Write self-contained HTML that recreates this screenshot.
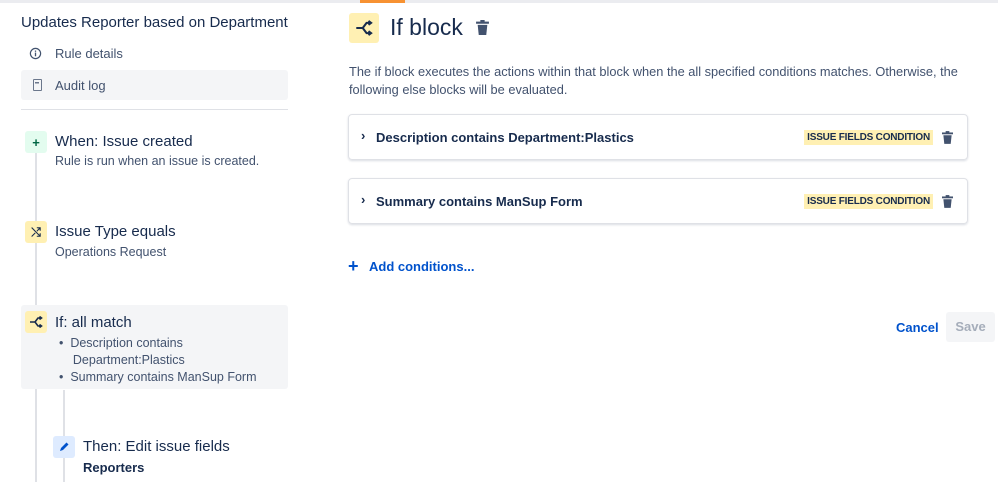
<!DOCTYPE html>
<html><head><style>
*{margin:0;padding:0;box-sizing:border-box}
body{width:998px;height:482px;overflow:hidden;background:#fff;font-family:"Liberation Sans",sans-serif;color:#172b4d;position:relative}
.a{position:absolute}
.ic{position:absolute;width:22px;height:22px;border-radius:3px;display:flex;align-items:center;justify-content:center;font-size:13px}
.card{position:absolute;left:348px;width:620px;height:46px;border:1px solid #dfe1e6;border-radius:4px;box-shadow:0 1px 2px rgba(9,30,66,.15)}
.card .t{position:absolute;left:27px;top:15px;font-size:13px;font-weight:bold;color:#172b4d}
.card .ch{position:absolute;left:12px;top:13px;font-size:13px;font-weight:bold}
.lz{position:absolute;right:34px;top:15px;background:#fff0b3;font-size:10px;font-weight:bold;padding:2px 3px;color:#172b4d;letter-spacing:-0.2px}
.tr{position:absolute;right:14px;top:16px}
</style></head><body>
<div class="a" style="left:0;top:0;width:998px;height:3px;background:#ebecf0"></div>
<div class="a" style="left:360px;top:0;width:45px;height:3px;background:#f79232"></div>

<div class="a" style="left:21px;top:14px;font-size:15px;">Updates Reporter based on Department</div>
<svg class="a" style="left:29px;top:47px" width="13" height="13" viewBox="0 0 14 14"><circle cx="7" cy="7" r="5.5" fill="none" stroke="#42526e" stroke-width="1.3"/><rect x="6.3" y="6" width="1.4" height="4" fill="#42526e"/><rect x="6.3" y="3.8" width="1.4" height="1.4" fill="#42526e"/></svg>
<div class="a" style="left:55px;top:46px;font-size:13px;color:#42526e">Rule details</div>
<div class="a" style="left:21px;top:70px;width:267px;height:30px;background:#f4f5f7;border-radius:3px"></div>
<div class="a" style="left:33px;top:79px;width:9px;height:12px;border:1.5px solid #6b778c;border-radius:1px;background:linear-gradient(#6b778c,#6b778c) 1px 2px/4px 1.5px no-repeat"></div>
<div class="a" style="left:55px;top:78px;font-size:13px;color:#42526e">Audit log</div>
<div class="a" style="left:21px;top:109px;width:267px;height:1px;background:#dfe1e6"></div>

<div class="a" style="left:35px;top:152px;width:2px;height:330px;background:#dfe1e6"></div>
<div class="a" style="left:63px;top:390px;width:2px;height:92px;background:#dfe1e6"></div>

<div class="ic" style="left:25px;top:131px;background:#e3fcef;color:#006644;font-weight:bold">+</div>
<div class="a" style="left:55px;top:133px;font-size:15px">When: Issue created</div>
<div class="a" style="left:55px;top:154px;font-size:12.5px;color:#42526e">Rule is run when an issue is created.</div>

<div class="ic" style="left:25px;top:221px;background:#fff0b3;font-size:12px;font-weight:bold">⤭</div>
<div class="a" style="left:55px;top:223px;font-size:15px">Issue Type equals</div>
<div class="a" style="left:55px;top:245px;font-size:12.5px;color:#42526e">Operations Request</div>

<div class="a" style="left:21px;top:305px;width:267px;height:84px;background:#f4f5f7;border-radius:3px"></div>
<div class="ic" style="left:25px;top:311px;background:#fff0b3"><svg width="14" height="12" viewBox="0 0 14 12"><path d="M1 6H6M6 6L9 2H12M6 6L9 10H12M10.5 0.5L12.5 2L10.5 3.5M10.5 8.5L12.5 10L10.5 11.5" fill="none" stroke="#172b4d" stroke-width="1.6"/></svg></div>
<div class="a" style="left:55px;top:314px;font-size:15px">If: all match</div>
<div class="a" style="left:59px;top:335px;font-size:12.5px;line-height:17px;color:#42526e">•&nbsp;&nbsp;Description contains<br>&nbsp;&nbsp;&nbsp;&nbsp;Department:Plastics<br>•&nbsp;&nbsp;Summary contains ManSup Form</div>

<div class="ic" style="left:53px;top:436px;background:#deebff"><svg width="12" height="12" viewBox="0 0 12 12"><path d="M2 10L3 7L8.5 1.5L10.5 3.5L5 9Z" fill="#0052cc"/></svg></div>
<div class="a" style="left:83px;top:438px;font-size:15px">Then: Edit issue fields</div>
<div class="a" style="left:83px;top:460px;font-size:13px;font-weight:bold">Reporters</div>

<div class="a" style="left:349px;top:13px;width:30px;height:30px;background:#fff0b3;border-radius:3px;display:flex;align-items:center;justify-content:center"><svg width="18" height="16" viewBox="0 0 14 12"><path d="M1 6H6M6 6L9 2H12M6 6L9 10H12M10.5 0.5L12.5 2L10.5 3.5M10.5 8.5L12.5 10L10.5 11.5" fill="none" stroke="#172b4d" stroke-width="1.6"/></svg></div>
<div class="a" style="left:390px;top:14px;font-size:23px;">If block</div>
<svg class="a" style="left:476px;top:20px" width="13" height="15" viewBox="0 0 12 14"><rect x="0" y="1.5" width="12" height="2" fill="#42526e"/><rect x="4" y="0" width="4" height="2" fill="#42526e"/><path d="M1.5 4.5H10.5L9.5 14H2.5Z" fill="#42526e"/></svg>

<div class="a" style="left:349px;top:63px;width:620px;font-size:12.8px;line-height:18px;color:#42526e">The if block executes the actions within that block when the all specified conditions matches. Otherwise, the following else blocks will be evaluated.</div>

<div class="card" style="top:114px"><span class="ch">›</span><span class="t">Description contains Department:Plastics</span><span class="lz">ISSUE FIELDS CONDITION</span><svg class="tr" width="11" height="13" viewBox="0 0 12 14"><rect x="0" y="1.5" width="12" height="2" fill="#42526e"/><rect x="4" y="0" width="4" height="2" fill="#42526e"/><path d="M1.5 4.5H10.5L9.5 14H2.5Z" fill="#42526e"/></svg></div>
<div class="card" style="top:178px"><span class="ch">›</span><span class="t">Summary contains ManSup Form</span><span class="lz">ISSUE FIELDS CONDITION</span><svg class="tr" width="11" height="13" viewBox="0 0 12 14"><rect x="0" y="1.5" width="12" height="2" fill="#42526e"/><rect x="4" y="0" width="4" height="2" fill="#42526e"/><path d="M1.5 4.5H10.5L9.5 14H2.5Z" fill="#42526e"/></svg></div>

<div class="a" style="left:348px;top:256px;font-size:18px;color:#0052cc;font-weight:bold">+</div>
<div class="a" style="left:369px;top:259px;font-size:13px;font-weight:bold;color:#0052cc">Add conditions...</div>

<div class="a" style="left:896px;top:320px;font-size:13px;font-weight:bold;color:#0052cc">Cancel</div>
<div class="a" style="left:946px;top:312px;width:49px;height:30px;background:#f4f5f7;border-radius:3px;color:#a5adba;font-size:13px;font-weight:bold;text-align:center;line-height:30px">Save</div>
</body></html>
